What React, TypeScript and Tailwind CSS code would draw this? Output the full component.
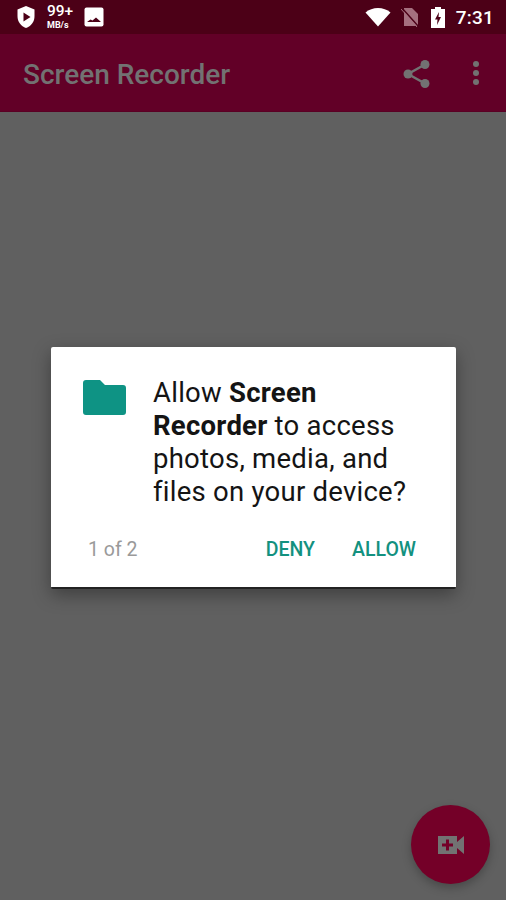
export default function App() {
  return (
    <div className="relative w-[506px] h-[900px] overflow-hidden flex flex-col bg-[#606060] font-['Roboto',sans-serif]">
      <div className="h-[34px] shrink-0 flex items-center bg-[#4c0017] pl-[16px] pr-[12px] text-white">
        <svg width="20" height="24" viewBox="0 0 20 24" className="shrink-0">
          <path d="M10 1 L18.5 4.5 V11 C18.5 17 15 21 10 23 C5 21 1.5 17 1.5 11 V4.5 Z" fill="#fff" />
          <path d="M7.5 7.5 L14.5 12 L7.5 16.5 Z" fill="#4c0017" />
        </svg>
        <div className="ml-[11px] w-[36px] flex flex-col items-start leading-none pt-[2px]">
          <span className="text-[15.5px] font-medium leading-[15px] mt-[-2px]">99+</span>
          <span className="text-[9px] font-bold leading-[9px] mt-[2px]">MB/s</span>
        </div>
        <svg width="20" height="20" viewBox="0 0 20 20" className="ml-[1px] shrink-0">
          <rect x="0.5" y="0.5" width="19" height="19" rx="2" fill="#fff" />
          <path d="M3 15 L6.5 12.5 L8.5 13.5 L12 10.5 L17 15 Z" fill="#4c0017" />
        </svg>
        <div className="flex-1" />
        <svg width="26" height="20" viewBox="0 0 26 20" className="shrink-0">
          <path d="M0.5 5.5 C7 -0.5 19 -0.5 25.5 5.5 L13 19.5 Z" fill="#fff" />
        </svg>
        <svg width="18" height="20" viewBox="0 0 18 20" className="ml-[10px] shrink-0">
          <path d="M3 1 H11 L17 7 V19 H3 Z" fill="#a5707f" />
          <path d="M0.5 0.5 L17.5 19.5" stroke="#4c0017" strokeWidth="1.5" />
          <path d="M0 2 L16 20" stroke="#a5707f" strokeWidth="1" />
        </svg>
        <svg width="15" height="24" viewBox="0 0 15 24" className="ml-[12px] shrink-0">
          <path d="M4 4 V2 H10 V4 H14 V23 H0 V4 Z" fill="#fff" />
          <path d="M8 7 L4 14.5 H6.5 L6 20 L10 12 H7.5 Z" fill="#4c0017" />
        </svg>
        <span className="ml-[10px] text-[19px] font-medium leading-none tracking-[0.2px]">7:31</span>
      </div>
      <div className="h-[78px] shrink-0 flex items-center bg-[#620027] pl-[23px] pr-[27px] border-b border-[#5a0024]">
        <span className="text-[28px] font-medium text-[#727272] leading-none mt-[5px]">Screen Recorder</span>
        <div className="flex-1" />
        <svg width="28" height="34" viewBox="0 0 28 34" className="shrink-0 mt-[2px]">
          <path d="M22 7.5 L5 17 L22 26.5" fill="none" stroke="#727272" strokeWidth="2.5" />
          <circle cx="22" cy="7.5" r="4.5" fill="#727272" />
          <circle cx="5" cy="17" r="4.5" fill="#727272" />
          <circle cx="22" cy="26.5" r="4.5" fill="#727272" />
        </svg>
        <div className="ml-[42px] flex flex-col gap-[3px] mt-[1px]">
          <div className="w-[6px] h-[6px] rounded-full bg-[#727272]" />
          <div className="w-[6px] h-[6px] rounded-full bg-[#727272]" />
          <div className="w-[6px] h-[6px] rounded-full bg-[#727272]" />
        </div>
      </div>
      <div className="flex-1 pt-[235px] pl-[51px] pr-[50px]">
        <div className="h-[242px] bg-white rounded-[2px] shadow-[0_6px_18px_rgba(0,0,0,0.35)] border-b-2 border-[#222] flex flex-col">
          <div className="flex pl-[32px] pt-[29px]">
            <svg width="43" height="35" viewBox="0 0 43 35" className="shrink-0 mt-[4px]">
              <path d="M3 0 H17 L22 5 H40 C42 5 43 6 43 8 V32 C43 34 42 35 40 35 H3 C1 35 0 34 0 32 V3 C0 1 1 0 3 0 Z" fill="#0e9384" />
            </svg>
            <p className="ml-[27px] w-[272px] text-[27.5px] leading-[33px] tracking-[0.25px] text-[#141414] font-normal">
              Allow <b className="font-bold">Screen</b> <b className="font-bold">Recorder</b> to access photos, media, and files on your device?
            </p>
          </div>
          <div className="flex items-center pl-[37px] pr-[40px] mt-[32px]">
            <span className="text-[19.5px] text-[#9a9a9a] leading-none">1 of 2</span>
            <div className="flex-1" />
            <span className="text-[19.5px] font-medium text-[#13917f] leading-none">DENY</span>
            <span className="ml-[37px] text-[19.5px] font-medium text-[#13917f] leading-none">ALLOW</span>
          </div>
        </div>
      </div>
      <div className="absolute left-[411px] top-[805px] w-[79px] h-[79px] rounded-full bg-[#740028] shadow-[0_4px_10px_rgba(0,0,0,0.25)] flex items-center justify-center">
        <svg width="28" height="20" viewBox="0 0 28 20">
          <path d="M1 1 H20 V7 L27 1 V19 L20 13 V19 H1 Z" fill="#727272" />
          <path d="M9 4.5 H12 V8.5 H16 V11.5 H12 V15.5 H9 V11.5 H5 V8.5 H9 Z" fill="#740028" />
        </svg>
      </div>
    </div>
  );
}
